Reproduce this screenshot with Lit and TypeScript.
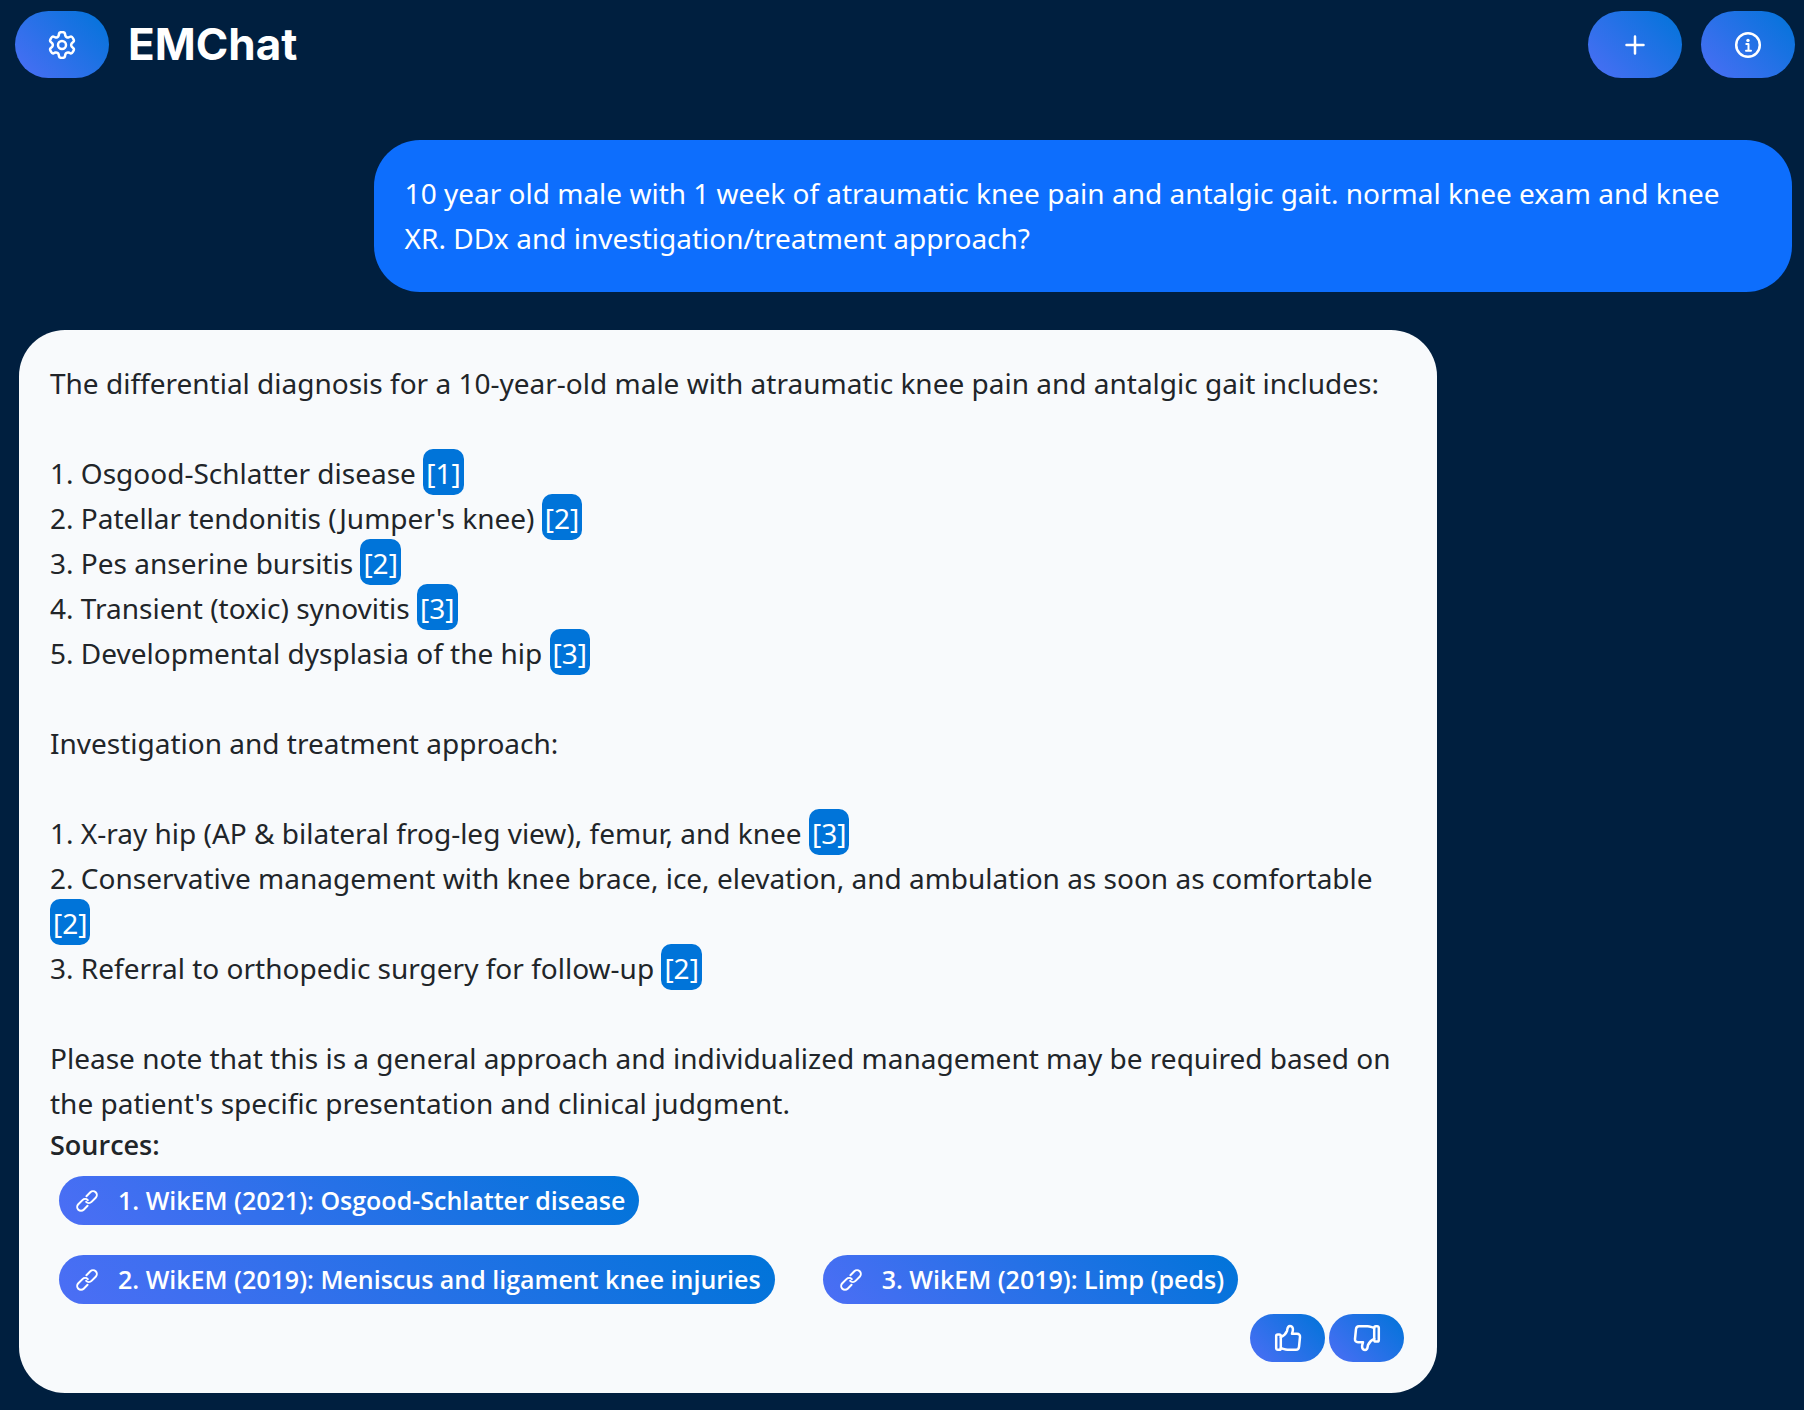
import { LitElement, html, svg, css } from 'lit';
import { customElement } from 'lit/decorators.js';

const gearOutline = (): string => {
  const profile: [number, number][] = [
    [-24, 9.2], [-17, 10.6], [-12, 13.2], [12, 13.2], [17, 10.6], [24, 9.2],
  ];
  const pts: [number, number][] = [];
  for (let tooth = 0; tooth < 6; tooth++) {
    for (const [offset, radius] of profile) {
      const a = ((tooth * 60 - 90 + offset) * Math.PI) / 180;
      pts.push([14 + radius * Math.cos(a), 14 + radius * Math.sin(a)]);
    }
  }
  const mid = (i: number) => {
    const p = pts[i % pts.length];
    const q = pts[(i + 1) % pts.length];
    return `${((p[0] + q[0]) / 2).toFixed(2)} ${((p[1] + q[1]) / 2).toFixed(2)}`;
  };
  let d = `M${mid(pts.length - 1)}`;
  pts.forEach((p, i) => {
    d += `Q${p[0].toFixed(2)} ${p[1].toFixed(2)} ${mid(i)}`;
  });
  return d + 'Z';
};

const icons = {
  gear: svg`<path d=${gearOutline()} /><circle cx="14" cy="14" r="4" />`,
  plus: svg`<path d="M14 5.5V22.5M5.5 14H22.5" />`,
  info: svg`<circle cx="14" cy="14" r="11.8" />
    <circle cx="14" cy="9.4" r="1.7" fill="currentColor" stroke="none" />
    <path d="M12.3 13.1H14.5V19.5M12 19.8H17" stroke-width="2" />`,
  thumb: svg`<rect x="2.2" y="10.5" width="4.6" height="15.3" rx="1.6" />
    <path d="M6.8 13.2C9.5 12 12 9.5 13 7C13.5 5.5 13 2 16 2C18.5 2 19 4.3 18.9 6C18.8 7.5 18.3 8.6 18 9.8H23C25.2 9.8 26.2 11.2 26 13L25 22.8C24.800 24.6 23.8 25.8 22 25.8H13.5C11 25.8 9 24.6 6.8 24.2" />`,
};

const linkIcon = svg`<g transform="rotate(-45 12 12)">
  <path d="M15 8.2H20.5a3.8 3.8 0 0 1 0 7.6H14.6a3.8 3.8 0 0 1-3.8-3.8" />
  <path d="M9 15.8H3.5a3.8 3.8 0 0 1 0-7.6H9.4a3.8 3.8 0 0 1 3.8 3.8" />
</g>`;

interface Item {
  text: string;
  source: number;
}

const diagnoses: Item[] = [
  { text: 'Osgood-Schlatter disease', source: 1 },
  { text: "Patellar tendonitis (Jumper's knee)", source: 2 },
  { text: 'Pes anserine bursitis', source: 2 },
  { text: 'Transient (toxic) synovitis', source: 3 },
  { text: 'Developmental dysplasia of the hip', source: 3 },
];

const steps: Item[] = [
  { text: 'X-ray hip (AP & bilateral frog-leg view), femur, and knee', source: 3 },
  {
    text: 'Conservative management with knee brace, ice, elevation, and ambulation as soon as comfortable',
    source: 2,
  },
  { text: 'Referral to orthopedic surgery for follow-up', source: 2 },
];

const sources = [
  'WikEM (2021): Osgood-Schlatter disease',
  'WikEM (2019): Meniscus and ligament knee injuries',
  'WikEM (2019): Limp (peds)',
];

@customElement('app-root')
export class AppRoot extends LitElement {
  static styles = css`
    :host {
      display: block;
      box-sizing: border-box;
      min-height: 100vh;
      background: #001f3f;
      color: #212529;
      font: 28px/45px 'Noto Sans', 'Open Sans', sans-serif;
    }
    header {
      display: flex;
      align-items: center;
      gap: 19px;
      padding: 11px 9px 0 15px;
    }
    h1 {
      flex: 1;
      margin: 0;
      color: #fff;
      font: 700 44px/67px Inter, sans-serif;
    }
    button {
      display: flex;
      align-items: center;
      justify-content: center;
      padding: 0;
      border: 0;
      color: #fff;
      cursor: pointer;
      background: linear-gradient(45deg, #4c6ef5, #0074d9);
    }
    .tool {
      width: 94px;
      height: 67px;
      border-radius: 34px;
    }
    .icon {
      width: 28px;
      height: 28px;
      fill: none;
      stroke: currentColor;
      stroke-width: 2.5;
      stroke-linecap: round;
      stroke-linejoin: round;
    }
    .flipped {
      transform: rotate(180deg);
    }
    main {
      display: flex;
      flex-direction: column;
      gap: 38px;
      padding: 62px 12px 17px 19px;
    }
    .bubble {
      box-sizing: border-box;
      width: 80%;
      border-radius: 46px;
      padding: 31px;
    }
    .user {
      align-self: flex-end;
      background: #0d6efd;
      color: #fff;
    }
    .bot {
      background: #f8fafc;
    }
    p,
    ol,
    h2 {
      margin: 0;
      padding: 0;
    }
    ol {
      list-style: none;
    }
    .answer ol {
      margin: 45px 0;
    }
    .cite {
      padding: 5px 3px 3px;
      border-radius: 10px;
      background: #0074d9;
      color: #fff;
      text-decoration: none;
    }
    h2 {
      font: 600 27px/38px 'Open Sans', sans-serif;
    }
    .sources {
      display: flex;
      flex-wrap: wrap;
      gap: 30px 48px;
      padding: 12px 40px 10px 9px;
    }
    .source {
      display: flex;
      align-items: center;
      gap: 19px;
      padding: 0 14px 0 16px;
      border-radius: 25px;
      background: linear-gradient(45deg, #4c6ef5, #0074d9);
      color: #fff;
      font: 600 25px/49px 'Open Sans', sans-serif;
      text-decoration: none;
    }
    .link {
      width: 24px;
      height: 24px;
      overflow: visible;
      fill: none;
      stroke: currentColor;
      stroke-width: 2;
      stroke-linecap: round;
    }
    .feedback {
      display: flex;
      justify-content: flex-end;
      gap: 4px;
      padding-right: 2px;
    }
    .vote {
      width: 75px;
      height: 48px;
      border-radius: 24px;
    }
  `;

  private icon(shape: unknown, flipped = false) {
    return html`<svg class=${flipped ? 'icon flipped' : 'icon'} viewBox="0 0 28 28" aria-hidden="true">${shape}</svg>`;
  }

  private list(items: Item[]) {
    return html`<ol>
      ${items.map(
        (item, i) => html`<li>${i + 1}. ${item.text} <a class="cite" href="#source-${item.source}">[${item.source}]</a></li>`,
      )}
    </ol>`;
  }

  render() {
    return html`
      <header>
        <button class="tool" aria-label="Settings">${this.icon(icons.gear)}</button>
        <h1>EMChat</h1>
        <button class="tool" aria-label="New chat">${this.icon(icons.plus)}</button>
        <button class="tool" aria-label="About">${this.icon(icons.info)}</button>
      </header>
      <main>
        <section class="bubble user">
          <p>
            10 year old male with 1 week of atraumatic knee pain and antalgic gait. normal knee exam and knee XR. DDx
            and investigation/treatment approach?
          </p>
        </section>
        <section class="bubble bot">
          <div class="answer">
            <p>The differential diagnosis for a 10-year-old male with atraumatic knee pain and antalgic gait includes:</p>
            ${this.list(diagnoses)}
            <p>Investigation and treatment approach:</p>
            ${this.list(steps)}
            <p>
              Please note that this is a general approach and individualized management may be required based on the
              patient's specific presentation and clinical judgment.
            </p>
          </div>
          <h2>Sources:</h2>
          <div class="sources">
            ${sources.map(
              (name, i) => html`<a class="source" id="source-${i + 1}" href="#source-${i + 1}">
                <svg class="link" viewBox="0 0 24 24" aria-hidden="true">${linkIcon}</svg>
                <span>${i + 1}. ${name}</span>
              </a>`,
            )}
          </div>
          <div class="feedback">
            <button class="vote" aria-label="Good answer">${this.icon(icons.thumb)}</button>
            <button class="vote" aria-label="Bad answer">${this.icon(icons.thumb, true)}</button>
          </div>
        </section>
      </main>
    `;
  }
}
